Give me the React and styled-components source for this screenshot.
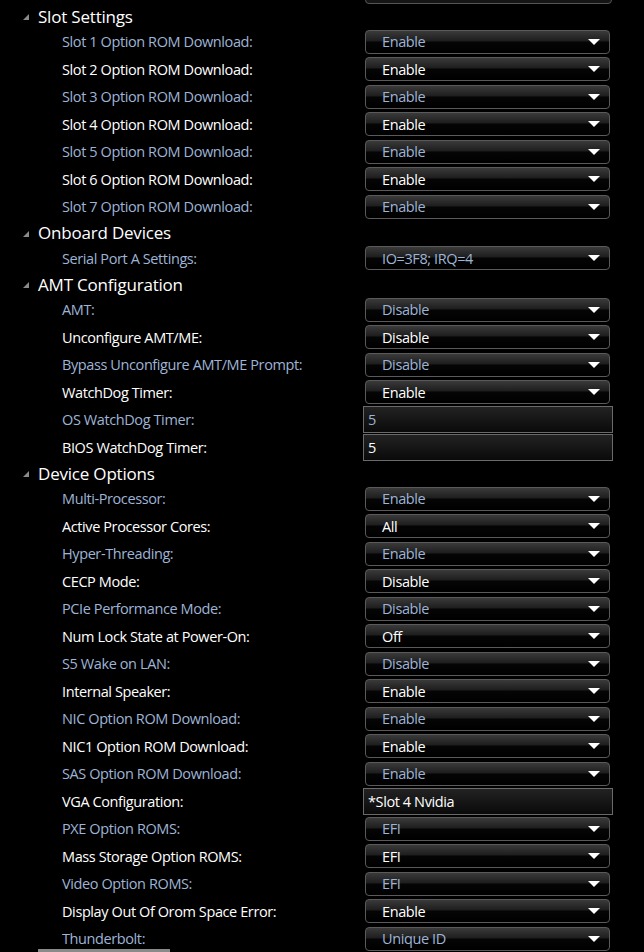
import React from "react";
import styled, { createGlobalStyle } from "styled-components";

const Global = createGlobalStyle`
  html, body { margin: 0; background: #000; overflow: hidden; }
  body { font-family: "Open Sans", "Noto Sans", sans-serif; }
`;

const Page = styled.div`
  width: 644px; height: 952px; background: #000; position: relative; overflow: hidden;
  padding-top: 4px; box-sizing: border-box;
`;
const TopStub = styled.div`
  position: absolute; top: -20px; left: 365px; width: 245px; height: 22px;
  border: 1px solid #555; border-radius: 4px; background: #151515;
`;
const BottomBar = styled.div`
  position: absolute; bottom: 0; left: 38px; width: 132px; height: 3px; background: #8a8a8a;
`;
const Heading = styled.div`
  height: 24px; display: flex; align-items: center; color: #fff; font-size: 17px;
  padding-left: 23px; gap: 9px; letter-spacing: -0.2px;
`;
const Tri = styled.span`
  width: 0; height: 0; border-left: 6px solid transparent; border-bottom: 6px solid #8a8a8a;
  margin-top: 2px;
`;
const Row = styled.div`
  height: 27.5px; display: flex; align-items: center;
  color: ${p => (p.$alt ? "#9eb4d6" : "#fff")};
  font-size: 14.5px; letter-spacing: -0.4px;
`;
const Label = styled.div`
  width: 363px; flex-shrink: 0; padding-left: 62px; box-sizing: border-box; white-space: nowrap;
`;
const Select = styled.div`
  margin-left: 2px; width: 245px; height: 24px; box-sizing: border-box; flex-shrink: 0;
  border: 1px solid #5a5a5a; border-radius: 4px;
  background: linear-gradient(#3a3a3a 0%, #1e1e1e 45%, #050505 50%, #000 100%);
  display: flex; align-items: center; justify-content: space-between;
  padding: 0 9px 0 16px;
`;
const Arrow = styled.span`
  width: 0; height: 0; border-left: 6px solid transparent; border-right: 6px solid transparent;
  border-top: 6px solid #fff;
`;
const Input = styled.div`
  width: 250px; height: 27px; box-sizing: border-box; border: 1px solid #6a6a6a; flex-shrink: 0;
  background: linear-gradient(#222, #0a0a0a); display: flex; align-items: center; padding-left: 4px;
`;

const sections = [
  ["Slot Settings", [1,2,3,4,5,6,7].map(n => [`Slot ${n} Option ROM Download:`, "Enable"])],
  ["Onboard Devices", [["Serial Port A Settings:", "IO=3F8; IRQ=4"]]],
  ["AMT Configuration", [
    ["AMT:", "Disable"], ["Unconfigure AMT/ME:", "Disable"], ["Bypass Unconfigure AMT/ME Prompt:", "Disable"],
    ["WatchDog Timer:", "Enable"], ["OS WatchDog Timer:", "5", true], ["BIOS WatchDog Timer:", "5", true],
  ]],
  ["Device Options", [
    ["Multi-Processor:", "Enable"], ["Active Processor Cores:", "All"], ["Hyper-Threading:", "Enable"],
    ["CECP Mode:", "Disable"], ["PCIe Performance Mode:", "Disable"], ["Num Lock State at Power-On:", "Off"],
    ["S5 Wake on LAN:", "Disable"], ["Internal Speaker:", "Enable"], ["NIC Option ROM Download:", "Enable"],
    ["NIC1 Option ROM Download:", "Enable"], ["SAS Option ROM Download:", "Enable"],
    ["VGA Configuration:", "*Slot 4 Nvidia", true], ["PXE Option ROMS:", "EFI"],
    ["Mass Storage Option ROMS:", "EFI"], ["Video Option ROMS:", "EFI"],
    ["Display Out Of Orom Space Error:", "Enable"], ["Thunderbolt:", "Unique ID"],
  ]],
];

export default function App() {
  return (
    <Page>
      <Global />
      <TopStub />
      {sections.map(([title, rows]) => (
        <React.Fragment key={title}>
          <Heading><Tri />{title}</Heading>
          {rows.map(([l, v, inp], i) => (
            <Row key={l} $alt={i % 2 === 0}>
              <Label>{l}</Label>
              {inp ? <Input>{v}</Input> : <Select><span>{v}</span><Arrow /></Select>}
            </Row>
          ))}
        </React.Fragment>
      ))}
      <BottomBar />
    </Page>
  );
}
